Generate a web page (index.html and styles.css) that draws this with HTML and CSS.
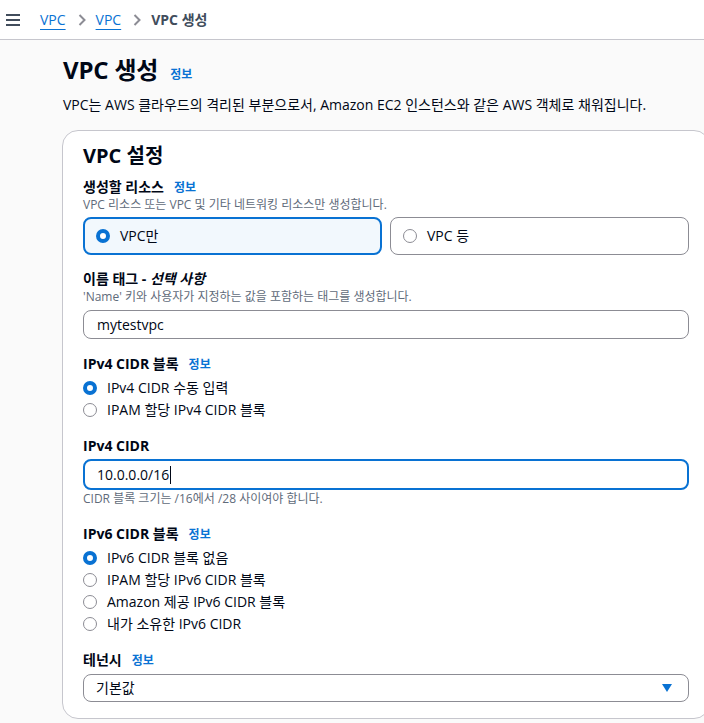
FILE: index.html
```html
<!DOCTYPE html>
<html lang="ko">
<head>
<meta charset="utf-8">
<title>VPC 생성</title>
<link rel="stylesheet" href="styles.css">
</head>
<body>
<header class="topbar">
  <span class="menu" aria-label="메뉴">
    <svg width="14" height="12" viewBox="0 0 14 12"><rect x="0" y="0" width="14" height="2" fill="#414d5c"/><rect x="0" y="5" width="14" height="2" fill="#414d5c"/><rect x="0" y="10" width="14" height="2" fill="#414d5c"/></svg>
  </span>
  <nav class="crumbs">
    <a class="crumb-link" href="#">VPC</a>
    <svg class="chev" width="8" height="12" viewBox="0 0 8 12"><path d="M1.5 1 L6.5 6 L1.5 11" fill="none" stroke="#8c8c94" stroke-width="2"/></svg>
    <a class="crumb-link" href="#">VPC</a>
    <svg class="chev" width="8" height="12" viewBox="0 0 8 12"><path d="M1.5 1 L6.5 6 L1.5 11" fill="none" stroke="#8c8c94" stroke-width="2"/></svg>
    <span class="crumb-current">VPC 생성</span>
  </nav>
</header>

<main class="page">
  <div class="page-head">
    <h1 class="title">VPC 생성</h1>
    <a class="info" href="#">정보</a>
  </div>
  <p class="page-desc">VPC는 AWS 클라우드의 격리된 부분으로서, Amazon EC2 인스턴스와 같은 AWS 객체로 채워집니다.</p>

  <section class="card">
    <h2 class="card-title">VPC 설정</h2>

    <div class="field">
      <div class="label-row"><span class="label">생성할 리소스</span><a class="info" href="#">정보</a></div>
      <div class="desc">VPC 리소스 또는 VPC 및 기타 네트워킹 리소스만 생성합니다.</div>
      <div class="tiles">
        <div class="tile selected"><span class="radio checked"></span><span>VPC만</span></div>
        <div class="tile"><span class="radio"></span><span>VPC 등</span></div>
      </div>
    </div>

    <div class="field gap14">
      <div class="label-row"><span class="label">이름 태그 - <em>선택 사항</em></span></div>
      <div class="desc">'Name' 키와 사용자가 지정하는 값을 포함하는 태그를 생성합니다.</div>
      <div class="input">mytestvpc</div>
    </div>

    <div class="field gap15">
      <div class="label-row"><span class="label">IPv4 CIDR 블록</span><a class="info" href="#">정보</a></div>
      <div class="radios">
        <div class="radio-row"><span class="radio checked"></span><span>IPv4 CIDR 수동 입력</span></div>
        <div class="radio-row"><span class="radio"></span><span>IPAM 할당 IPv4 CIDR 블록</span></div>
      </div>
    </div>

    <div class="field gap15">
      <div class="label-row"><span class="label">IPv4 CIDR</span></div>
      <div class="input focused">10.0.0.0/16<span class="caret"></span></div>
      <div class="desc constraint">CIDR 블록 크기는 /16에서 /28 사이여야 합니다.</div>
    </div>

    <div class="field gap17">
      <div class="label-row"><span class="label">IPv6 CIDR 블록</span><a class="info" href="#">정보</a></div>
      <div class="radios">
        <div class="radio-row"><span class="radio checked"></span><span>IPv6 CIDR 블록 없음</span></div>
        <div class="radio-row"><span class="radio"></span><span>IPAM 할당 IPv6 CIDR 블록</span></div>
        <div class="radio-row"><span class="radio"></span><span>Amazon 제공 IPv6 CIDR 블록</span></div>
        <div class="radio-row"><span class="radio"></span><span>내가 소유한 IPv6 CIDR</span></div>
      </div>
    </div>

    <div class="field gap15">
      <div class="label-row"><span class="label">테넌시</span><a class="info" href="#">정보</a></div>
      <div class="input select"><span>기본값</span>
        <svg width="10" height="8" viewBox="0 0 10 8"><path d="M0 0 H10 L5 8 Z" fill="#0972d3"/></svg>
      </div>
    </div>
  </section>
</main>
</body>
</html>
```

FILE: styles.css
```css
* { box-sizing: border-box; }
html, body { margin: 0; padding: 0; }
body {
  background: #fafafa;
  font-family: "Open Sans", "Noto Sans CJK KR", sans-serif;
  font-size: 14px;
  line-height: 20px;
  color: #000716;
  overflow: hidden;
  width: 704px;
}
a { text-decoration: none; }

.topbar {
  height: 40px;
  background: #ffffff;
  border-bottom: 1px solid #c6c6cd;
  display: flex;
  align-items: center;
  padding-left: 6px;
}
.menu { display: flex; width: 14px; height: 12px; margin-right: 20px; }
.crumbs { display: flex; align-items: center; font-size: 14px; line-height: 20px; }
.crumb-link { color: #0972d3; text-decoration: underline; text-underline-offset: 4px; text-decoration-thickness: 1px; }
.chev { margin: 0 10px 0 12px; }
.crumb-current { color: #414d5c; font-weight: 700; }

.page { padding: 0 0 0 62px; }
.page-head { display: flex; align-items: baseline; gap: 12px; padding-top: 15px; padding-left: 1px; }
.title { margin: 0; font-size: 24px; line-height: 30px; font-weight: 700; letter-spacing: -0.2px; }
.info { color: #0972d3; font-size: 12px; font-weight: 700; line-height: 16px; }
.page-desc { margin: 10px 0 15px 1px; font-size: 14px; line-height: 20px; }

.card {
  width: 648px;
  background: #ffffff;
  border: 1px solid #c6c6cd;
  border-radius: 16px;
  padding: 12px 20px 16px 20px;
}
.card-title { margin: 0 0 8px 0; font-size: 20px; line-height: 26px; font-weight: 700; }

.field { display: flex; flex-direction: column; }
.gap14 { margin-top: 14px; }
.gap15 { margin-top: 15px; }
.gap17 { margin-top: 17px; }

.label-row { display: flex; align-items: baseline; gap: 10px; }
.label { font-weight: 700; font-size: 14px; line-height: 20px; }
.label em { font-style: italic; }
.desc { color: #5f6b7a; font-size: 12px; line-height: 16px; }
.constraint { margin-top: 1px; }

.tiles { display: grid; grid-template-columns: 1fr 1fr; gap: 8px; margin-top: 4px; }
.tile {
  height: 38px;
  border: 1px solid #8c8c94;
  border-radius: 8px;
  display: flex;
  align-items: center;
  gap: 10px;
  padding-left: 12px;
  background: #ffffff;
}
.tile.selected { border: 2px solid #0972d3; background: #f2f8fd; padding-left: 11px; }

.radio {
  width: 14px; height: 14px;
  border-radius: 50%;
  border: 1.5px solid #8c8c94;
  background: #ffffff;
  flex: none;
}
.radio.checked { border: 4px solid #0972d3; }

.radios { display: flex; flex-direction: column; margin-top: 3px; }
.radio-row { display: flex; align-items: center; gap: 10px; height: 22px; }

.input {
  margin-top: 5px;
  height: 29px;
  border: 1px solid #8c8c94;
  border-radius: 8px;
  display: flex;
  align-items: center;
  padding-left: 13px;
  font-size: 14px;
  background: #ffffff;
}
.input.focused { margin-top: 3px; height: 31px; border: 2px solid #0972d3; padding-left: 12px; }
.caret { display: inline-block; width: 1px; height: 18px; background: #000716; margin-left: 1px; }
.select { justify-content: space-between; padding-right: 16px; padding-left: 12px; margin-top: 4px; height: 28px; }
.select svg { display: block; }
```
